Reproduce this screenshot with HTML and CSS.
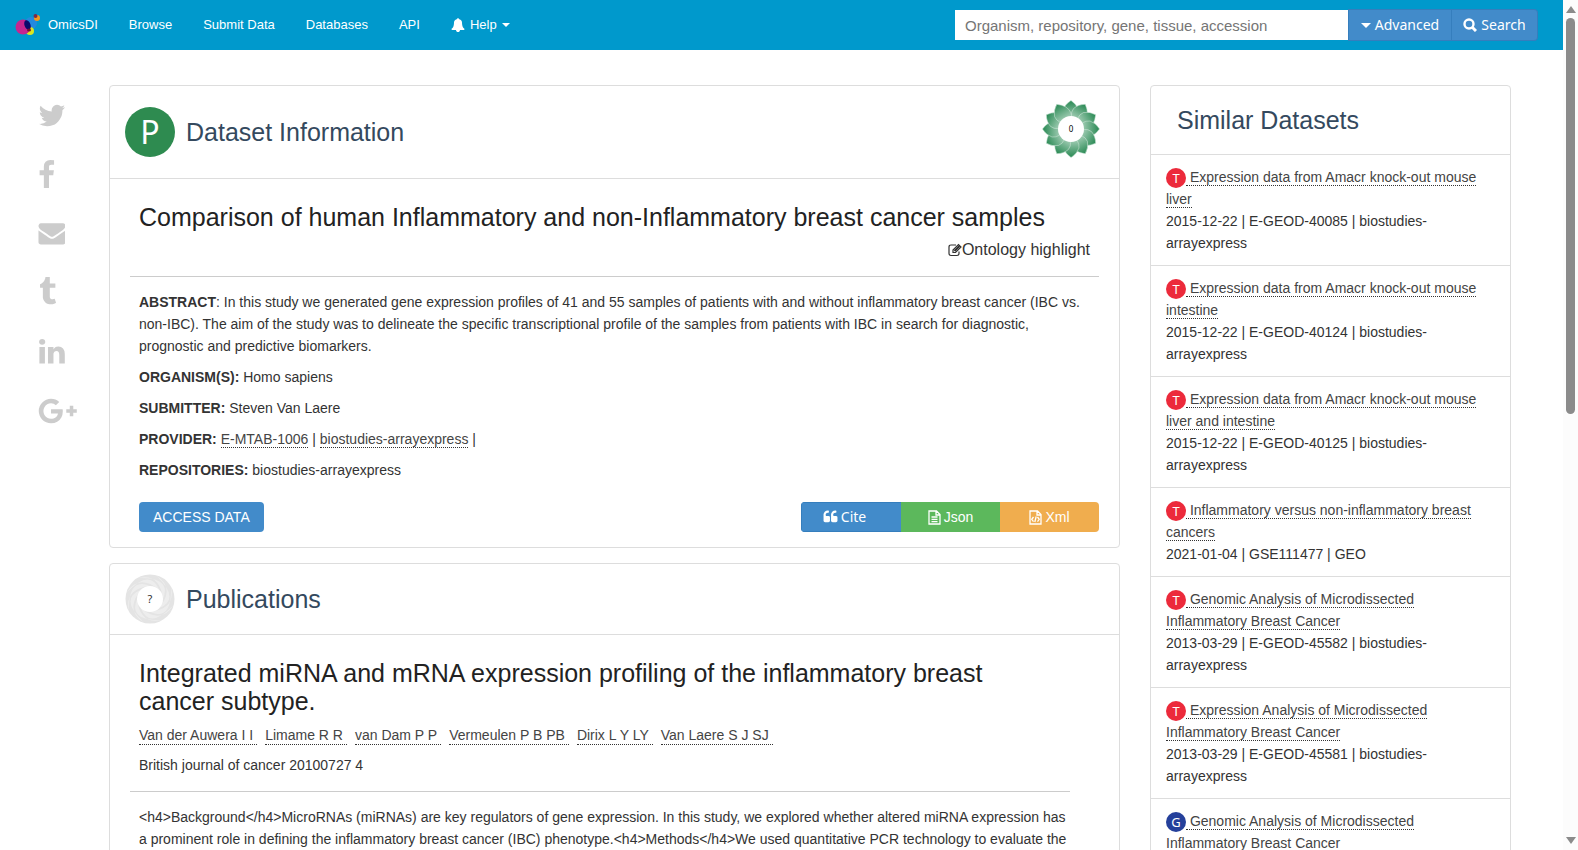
FILE: index.html
```html
<!DOCTYPE html>
<html lang="en">
<head>
<meta charset="utf-8">
<title>OmicsDI - Dataset</title>
<link rel="stylesheet" href="styles.css">
</head>
<body>
<svg class="defs" aria-hidden="true">
  <defs>
    <linearGradient id="green" gradientUnits="userSpaceOnUse" x1="0" y1="-28" x2="0" y2="-8">
      <stop offset="0" stop-color="#2b8a55"/><stop offset="1" stop-color="#b5d8c4"/>
    </linearGradient>
    <path id="petal" d="M0-28.500Q9-22 8-14Q7-8 1-8Q-9-10-8-19Q-6-25 0-28.500Z"/>
    <path id="swirl" d="M-12-21Q10-26 13 0Q22-22-12-21Z"/>
  </defs>
</svg>
<div class="viewport">
  <div class="page">
    <header class="navbar">
      <nav class="nav">
        <a class="brand" href="#">
          <svg width="26" height="22" viewBox="0 0 26 22" aria-hidden="true">
            <circle cx="16" cy="9" r="6" fill="#2389de"/>
            <circle cx="15" cy="17" r="4" fill="#dbe620"/>
            <circle cx="8" cy="13" r="7.500" fill="#c7258f"/>
            <ellipse cx="12.500" cy="11" rx="3" ry="5" fill="#0b0a6b" transform="rotate(-20 12.500 11)"/>
            <ellipse cx="14" cy="16" rx="2" ry="1.500" fill="#7a1030"/>
            <circle cx="22" cy="4" r="3" fill="#f39a1e"/>
            <circle cx="20.500" cy="2" r="2" fill="#7a2a4a"/>
          </svg>
          <span>OmicsDI</span>
        </a>
        <a href="#">Browse</a>
        <a href="#">Submit Data</a>
        <a href="#">Databases</a>
        <a href="#">API</a>
        <a class="help" href="#">
          <svg width="14" height="14" viewBox="0 0 1792 1792" fill="currentColor" aria-hidden="true"><path d="M1728 1408q0 52-38 90t-90 38h-448q0 106-75 181t-181 75-181-75-75-181h-448q-52 0-90-38t-38-90q50-42 91-88t85-119.500 74.500-158.500 50-206 19.500-260q0-152 117-282.500t307-158.500q-8-19-8-39 0-40 28-68t68-28 68 28 28 68q0 20-8 39 190 28 307 158.500t117 282.500q0 139 19.500 260t50 206 74.500 158.500 85 119.500 91 88z"/></svg>
          <span>Help</span><i class="caret"></i>
        </a>
      </nav>
      <form class="search">
        <input type="text" aria-label="Search datasets" placeholder="Organism, repository, gene, tissue, accession">
        <button type="button"><i class="caret"></i>Advanced</button>
        <button type="button"><svg width="14" height="14" viewBox="0 0 14 14" fill="none" stroke="currentColor" aria-hidden="true"><circle cx="6" cy="6" r="4.500" stroke-width="2.400"/><path d="M9 9l4 4" stroke-width="3"/></svg>Search</button>
      </form>
    </header>

    <div class="layout">
      <aside class="share">
        <a href="#" aria-label="Twitter"><svg width="30" height="30" viewBox="64 -32 1792 1792"><path d="M1684 408q-67 98-162 167 1 14 1 42 0 130-38 259.500t-115.500 248.500-184.500 210.500-258 146-323 54.500q-271 0-496-145 35 4 78 4 225 0 401-138-105-2-188-64.500t-114-159.500q33 5 61 5 43 0 85-11-112-23-185.500-111.500t-73.500-205.500v-4q68 38 146 41-66-44-105-115t-39-154q0-88 44-163 121 149 294.500 238.500t371.500 99.500q-8-38-8-74 0-134 94.500-228.500t228.500-94.500q140 0 236 102 109-21 205-78-37 115-142 178 93-10 186-50z"/></svg></a>
        <a href="#" aria-label="Facebook"><svg width="30" height="30" viewBox="384 -64 1792 1792"><path d="M1343 12v264h-157q-86 0-116 36t-30 108v189h293l-39 296h-254v759h-306v-759h-255v-296h255v-218q0-186 104-288.500t277-102.500q147 0 228 12z"/></svg></a>
        <a href="#" aria-label="Email"><svg width="27" height="30" viewBox="-32 0 1792 1792"><path d="M1792 710v794q0 66-47 113t-113 47h-1472q-66 0-113-47t-47-113v-794q44 49 101 87 362 246 497 345 57 42 92.500 65.500t94.500 48 110 24.500h2q51 0 110-24.500t94.500-48 92.500-65.500q170-123 498-345 57-39 100-87zm0-294q0 79-49 151t-122 123q-376 261-468 325-10 7-42.500 31t-54 38.500-52 32.500-57.500 27-50 9h-2q-23 0-50-9t-57.500-27-52-32.500-54-38.500-42.500-31q-91-64-262-182.500t-205-142.500q-62-42-117-115.500t-55-136.500q0-78 41.500-130t118.500-52h1472q65 0 112.500 47t47.500 113z"/></svg></a>
        <a href="#" aria-label="Tumblr"><svg width="30" height="30" viewBox="330 32 1792 1792"><path d="M1328 1329l80 237q-23 35-111 66t-177 32q-104 2-190.500-26t-142.500-74-95-106-55.500-120-16.500-118v-544h-168v-215q72-26 129-69.500t91-90 58-102 34-99 15-88.500q1-5 4.500-8.500t7.500-3.500h244v424h333v252h-334v518q0 30 6.500 56t22.500 52.500 49.500 41.500 81.500 14q78-2 134-29z"/></svg></a>
        <a href="#" aria-label="LinkedIn"><svg width="30" height="30" viewBox="64 -32 1792 1792"><path d="M477 625v991h-330v-991h330zm21-306q1 73-50.500 122t-135.500 49h-2q-82 0-132-49t-50-122q0-74 51.500-122.500t134.500-48.500 133 48.500 51 122.500zm1166 729v568h-329v-530q0-105-40.500-164.500t-126.500-59.500q-63 0-105.500 34.500t-63.500 85.500q-11 30-11 81v553h-329q2-399 2-647t-1-296l-1-48h329v144h-2q20-32 41-56t56.500-52 87-43.500 114.500-15.500q171 0 275 113.500t104 332.500z"/></svg></a>
        <a href="#" aria-label="Google Plus"><svg width="39" height="30" viewBox="-32 -64 2304 1792"><path d="M1437 913q0 208-87 370.500t-248 254-369 91.500q-149 0-285-58t-234-156-156-234-58-285 58-285 156-234 234-156 285-58q286 0 491 192l-199 191q-117-113-292-113-123 0-227.500 62t-165.500 168.500-61 232.500 61 232.500 165.500 168.500 227.500 62q83 0 152.500-23t114.500-57.500 78.500-78.500 49-83 21.500-74h-416v-252h692q12 63 12 122zm835-122v210h-209v209h-210v-209h-209v-210h209v-209h210v209h209z"/></svg></a>
      </aside>

      <main class="main">
        <section class="card">
          <header class="card-head tall">
            <span class="badge-lg">P</span>
            <h2>Dataset Information</h2>
            <svg class="flower" width="58" height="58" viewBox="-29 -29 58 58" role="img" aria-label="Score 0">
              <g fill="url(#green)" stroke="#cfe6d9" stroke-width=".5">
                <use href="#petal"/><use href="#petal" transform="rotate(30)"/><use href="#petal" transform="rotate(60)"/><use href="#petal" transform="rotate(90)"/><use href="#petal" transform="rotate(120)"/><use href="#petal" transform="rotate(150)"/><use href="#petal" transform="rotate(180)"/><use href="#petal" transform="rotate(210)"/><use href="#petal" transform="rotate(240)"/><use href="#petal" transform="rotate(270)"/><use href="#petal" transform="rotate(300)"/><use href="#petal" transform="rotate(330)"/>
              </g>
              <circle r="13" fill="#fff"/>
              <text class="score" y="3" text-anchor="middle">0</text>
            </svg>
          </header>
          <div class="card-body">
            <h3>Comparison of human Inflammatory and non-Inflammatory breast cancer samples</h3>
            <div class="ontology"><svg width="14" height="14" viewBox="0 0 14 14" fill="none" stroke="currentColor" aria-hidden="true"><path d="M8 2H3Q1 2 1 4V10.500Q1 12.500 3 12.500H9Q11 12.500 11 10.500V8.500" stroke-width="1.200"/><path d="M5 9.500V7L10.500 1.500L13 4L7.500 9.500Z" stroke-width="1.200"/><path d="M6.500 8L11.500 3" stroke-width="2"/></svg>Ontology highlight</div>
            <hr>
            <p><b>ABSTRACT</b>: In this study we generated gene expression profiles of 41 and 55 samples of patients with and without inflammatory breast cancer (IBC vs. non-IBC). The aim of the study was to delineate the specific transcriptional profile of the samples from patients with IBC in search for diagnostic, prognostic and predictive biomarkers.</p>
            <p><b>ORGANISM(S):</b> Homo sapiens</p>
            <p><b>SUBMITTER:</b> Steven Van Laere</p>
            <p><b>PROVIDER:</b> <a href="#">E-MTAB-1006</a> | <a href="#">biostudies-arrayexpress</a> |</p>
            <p><b>REPOSITORIES:</b> biostudies-arrayexpress</p>
            <div class="actions">
              <button class="btn access" type="button">ACCESS DATA</button>
              <div class="group">
                <button class="btn cite" type="button"><svg width="15" height="15" viewBox="0 64 1792 1792" fill="currentColor" aria-hidden="true"><path d="M832 960v384q0 80-56 136t-136 56h-384q-80 0-136-56t-56-136v-704q0-104 40.500-198.500t109.500-163.500 163.500-109.500 198.500-40.500h64q26 0 45 19t19 45v128q0 26-19 45t-45 19h-64q-106 0-181 75t-75 181v32q0 40 28 68t68 28h224q80 0 136 56t56 136zm896 0v384q0 80-56 136t-136 56h-384q-80 0-136-56t-56-136v-704q0-104 40.500-198.500t109.500-163.500 163.500-109.500 198.500-40.500h64q26 0 45 19t19 45v128q0 26-19 45t-45 19h-64q-106 0-181 75t-75 181v32q0 40 28 68t68 28h224q80 0 136 56t56 136z"/></svg>Cite</button>
                <button class="btn json" type="button"><svg width="13" height="15" viewBox="0 0 13 15" fill="none" stroke="currentColor" stroke-width="1.300" aria-hidden="true"><path d="M1 1H8.500L12 4.500V14H1ZM8 1V5H12M3.500 7H9.500M3.500 9.300H9.500M3.500 11.600H9.500"/></svg>Json</button>
                <button class="btn xml" type="button"><svg width="13" height="15" viewBox="0 0 13 15" fill="none" stroke="currentColor" stroke-width="1.300" aria-hidden="true"><path d="M1 1H8.500L12 4.500V14H1ZM8 1V5H12M4.500 7L2.800 9.300L4.500 11.600M8.500 7L10.200 9.300L8.500 11.600M7.200 6.500L5.800 12"/></svg>Xml</button>
              </div>
            </div>
          </div>
        </section>

        <section class="card">
          <header class="card-head">
            <svg width="50" height="50" viewBox="-25 -25 50 50" role="img" aria-label="Unknown">
              <circle r="24.500" fill="#e4e4e4"/>
              <g fill="#f2f2f2" opacity=".7">
                <use href="#swirl"/><use href="#swirl" transform="rotate(45)"/><use href="#swirl" transform="rotate(90)"/><use href="#swirl" transform="rotate(135)"/><use href="#swirl" transform="rotate(180)"/><use href="#swirl" transform="rotate(225)"/><use href="#swirl" transform="rotate(270)"/><use href="#swirl" transform="rotate(315)"/>
              </g>
              <circle r="13" fill="#fff"/>
              <text class="unknown" y="4" text-anchor="middle">?</text>
            </svg>
            <h2>Publications</h2>
          </header>
          <div class="card-body publication">
            <h3>Integrated miRNA and mRNA expression profiling of the inflammatory breast cancer subtype.</h3>
            <p class="authors"><a href="#">Van der Auwera I I</a><a href="#">Limame R R</a><a href="#">van Dam P P</a><a href="#">Vermeulen P B PB</a><a href="#">Dirix L Y LY</a><a href="#">Van Laere S J SJ</a></p>
            <p>British journal of cancer 20100727 4</p>
            <hr>
            <p>&lt;h4&gt;Background&lt;/h4&gt;MicroRNAs (miRNAs) are key regulators of gene expression. In this study, we explored whether altered miRNA expression has a prominent role in defining the inflammatory breast cancer (IBC) phenotype.&lt;h4&gt;Methods&lt;/h4&gt;We used quantitative PCR technology to evaluate the</p>
          </div>
        </section>
      </main>

      <aside class="card similar">
        <header class="similar-head"><h2>Similar Datasets</h2></header>
        <ul>
          <li><span class="dot">T</span><a href="#">&nbsp;Expression data from Amacr knock-out mouse liver</a><br>2015-12-22 | E-GEOD-40085 | biostudies-arrayexpress</li>
          <li><span class="dot">T</span><a href="#">&nbsp;Expression data from Amacr knock-out mouse intestine</a><br>2015-12-22 | E-GEOD-40124 | biostudies-arrayexpress</li>
          <li><span class="dot">T</span><a href="#">&nbsp;Expression data from Amacr knock-out mouse liver and intestine</a><br>2015-12-22 | E-GEOD-40125 | biostudies-arrayexpress</li>
          <li><span class="dot">T</span><a href="#">&nbsp;Inflammatory versus non-inflammatory breast cancers</a><br>2021-01-04 | GSE111477 | GEO</li>
          <li><span class="dot">T</span><a href="#">&nbsp;Genomic Analysis of Microdissected Inflammatory Breast Cancer</a><br>2013-03-29 | E-GEOD-45582 | biostudies-arrayexpress</li>
          <li><span class="dot">T</span><a href="#">&nbsp;Expression Analysis of Microdissected Inflammatory Breast Cancer</a><br>2013-03-29 | E-GEOD-45581 | biostudies-arrayexpress</li>
          <li><span class="dot blue">G</span><a href="#">&nbsp;Genomic Analysis of Microdissected Inflammatory Breast Cancer</a></li>
        </ul>
      </aside>
    </div>
  </div>
  <div class="scrollbar" aria-hidden="true">
    <i class="arrow up"></i>
    <i class="thumb"></i>
    <i class="arrow down"></i>
  </div>
</div>
</body>
</html>
```
FILE: styles.css
```css
* { box-sizing: border-box; }
body { margin: 0; background: #fff; color: #333; font: 14px/22px "Liberation Sans", Arial, sans-serif; }
h2, h3, p, ul { margin: 0; padding: 0; }
button, input { font: inherit; border: 0; margin: 0; }
svg { flex: none; }
.defs { position: absolute; width: 0; height: 0; }

.viewport { display: flex; height: 100vh; overflow: hidden; }
.page { flex: 1; min-width: 0; height: 100%; overflow: hidden; }

.navbar { display: flex; justify-content: space-between; align-items: center; height: 50px; padding: 0 25px 0 15px; background: #09c; color: #fff; }
.nav { display: flex; align-items: center; gap: 31px; font-size: 13px; }
.nav a { color: #fff; text-decoration: none; }
.nav .brand, .nav .help { display: flex; align-items: center; }
.brand { gap: 7px; }
.help { gap: 5px; }
.caret { width: 0; height: 0; border: 4px solid transparent; border-top-color: currentColor; border-bottom: 0; }
.search { display: flex; align-items: center; }
.search input { width: 393px; height: 30px; padding: 0 10px; background: #fff; font-size: 15px; color: #555; }
.search input::placeholder { color: #757575; opacity: 1; }
.search button { display: flex; align-items: center; justify-content: center; gap: 4px; width: 104px; height: 32px; padding: 0; background: #428bca; border: 1px solid #357ebd; color: #fff; font: 14px/22px "Noto Sans", sans-serif; }
.search .caret { border-width: 5px 5px 0; }
.search button + button { width: 86px; border-left: 0; border-radius: 0 4px 4px 0; }

.layout { display: grid; grid-template-columns: 71px minmax(0, 1fr) 361px; align-items: start; padding: 35px 52px 0 38px; }
.share { display: grid; gap: 29px; padding-top: 15px; }
.share a { display: block; height: 30px; }
.share svg { display: block; fill: #ccc; }

.main { display: grid; gap: 15px; margin-right: 30px; }
.card { border: 1px solid #ddd; border-radius: 4px; background: #fff; }
.card-head { display: flex; align-items: center; gap: 11px; height: 71px; padding: 0 15px; border-bottom: 1px solid #ddd; }
.card-head.tall { height: 93px; }
.card h2 { font-size: 25px; line-height: 30px; font-weight: 400; color: #34495e; }
.badge-lg { display: grid; place-items: center; width: 50px; height: 50px; border-radius: 50%; background: #2e8b50; color: #fff; font: 32px/50px "Noto Sans", sans-serif; }
.flower { margin: 0 4px 7px auto; }
.score { font: 8px "Noto Sans", sans-serif; fill: #000; }
.unknown { font: 11px "Noto Sans", sans-serif; fill: #333; }

.card-body { padding: 24px 20px 15px; }
.card-body h3 { padding: 0 9px; font-size: 25px; line-height: 28px; font-weight: 400; color: #222; }
.card-body p { padding: 0 9px; margin-bottom: 9px; }
.ontology { display: flex; justify-content: flex-end; align-items: center; margin: 8px 9px 0; font-size: 16px; line-height: 22px; }
hr { height: 1px; margin: 15px 0 14px; border: 0; background: #ccc; }
p a, li a { color: #444; text-decoration: none; border-bottom: 1px dotted #333; }
.actions { display: flex; justify-content: space-between; padding: 12px 0 0 9px; }
.btn { display: flex; align-items: center; justify-content: center; height: 30px; color: #fff; }
.access { padding: 0 14px; border-radius: 4px; background: #428bca; }
.group { display: flex; border-radius: 4px; overflow: hidden; }
.group .btn { width: 99px; gap: 3px; }
.group .cite { width: 100px; padding: 0 20px 0 6px; background: #428bca; border: 1px solid #357ebd; border-right: 0; font: 14px/22px "Noto Sans", sans-serif; }
.json { background: #5cb85c; }
.xml { background: #f0ad4e; }

.publication { padding-right: 49px; }
.publication h3 { margin-right: 20px; }
.publication p { padding-right: 0; }
.publication .authors { display: flex; gap: 8px; padding-top: 11px; line-height: 18px; }
.authors a { padding-right: 4px; }

.similar-head { height: 69px; padding: 19px 26px; border-bottom: 1px solid #ddd; }
.similar ul { list-style: none; }
.similar li { padding: 11px 15px; border-bottom: 1px solid #ddd; }
.dot { display: inline-block; width: 20px; height: 20px; margin-top: 2px; border-radius: 50%; background: #ec2a3b; color: #fff; font: 13px/20px "Noto Sans", sans-serif; text-align: center; vertical-align: top; }
.dot.blue { background: #25409b; }

.scrollbar { display: flex; flex-direction: column; align-items: center; width: 15px; padding: 6px 0; background: #fcfcfc; }
.thumb { width: 9px; height: 396px; margin-top: 5px; border-radius: 5px; background: #8b8b8b; }
.arrow { border: 5px solid transparent; }
.up { border-top: 0; border-bottom: 7px solid #8b8b8b; }
.down { margin-top: auto; border-bottom: 0; border-top: 7px solid #8b8b8b; }
```
